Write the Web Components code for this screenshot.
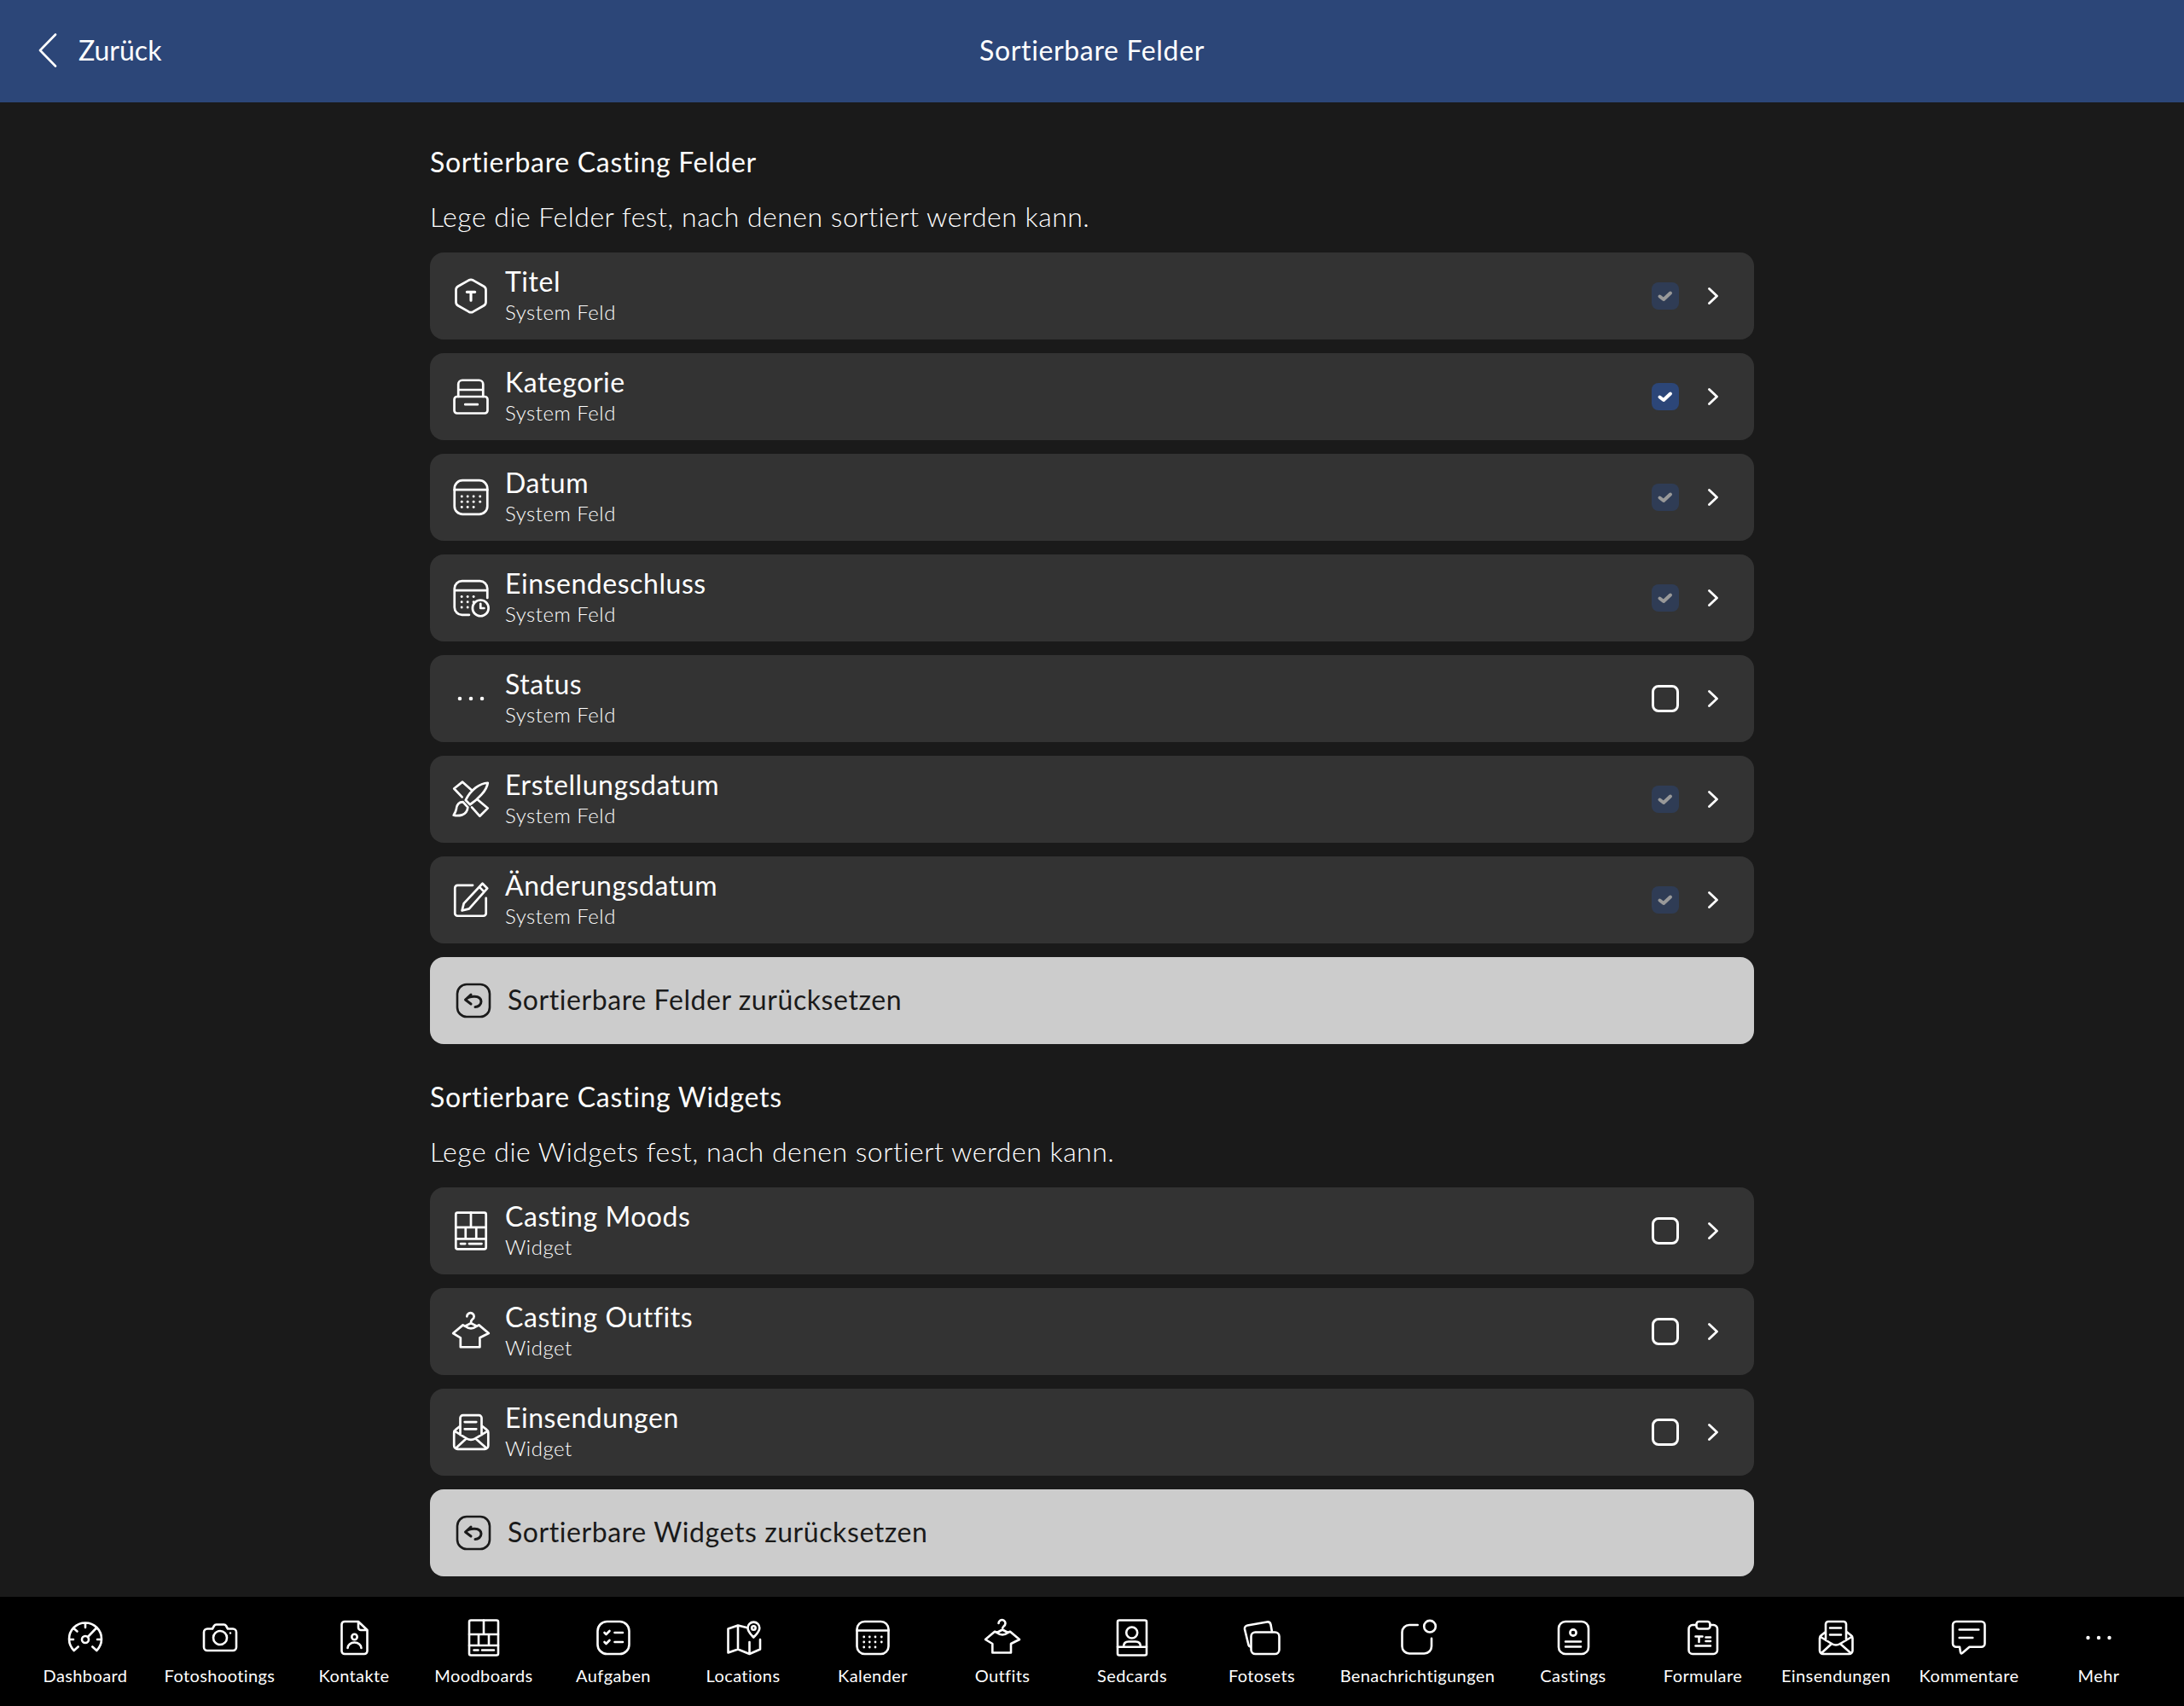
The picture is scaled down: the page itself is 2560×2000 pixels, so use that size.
<!DOCTYPE html>
<html lang="de">
<head>
<meta charset="utf-8">
<title>Sortierbare Felder</title>
<style>
  html, body { margin: 0; height: 100%; }
  body {
    display: flex;
    flex-direction: column;
    height: 2000px;
    background: #1a1a1a;
    color: #fff;
    font-family: "Lato", "Liberation Sans", sans-serif;
  }
  main { flex: 1; display: flex; flex-direction: column; gap: 42px; padding: 50px 504px 0; }
</style>
</head>
<body>
<app-header back="Zurück" title="Sortierbare Felder"></app-header>
<main>
  <field-section heading="Sortierbare Casting Felder" desc="Lege die Felder fest, nach denen sortiert werden kann.">
    <field-row icon="hex" label="Titel" sub="System Feld" state="locked"></field-row>
    <field-row icon="archive" label="Kategorie" sub="System Feld" state="on"></field-row>
    <field-row icon="calendar" label="Datum" sub="System Feld" state="locked"></field-row>
    <field-row icon="calclock" label="Einsendeschluss" sub="System Feld" state="locked"></field-row>
    <field-row icon="more" label="Status" sub="System Feld"></field-row>
    <field-row icon="design" label="Erstellungsdatum" sub="System Feld" state="locked"></field-row>
    <field-row icon="edit" label="Änderungsdatum" sub="System Feld" state="locked"></field-row>
    <reset-button>Sortierbare Felder zurücksetzen</reset-button>
  </field-section>
  <field-section heading="Sortierbare Casting Widgets" desc="Lege die Widgets fest, nach denen sortiert werden kann.">
    <field-row icon="moodboard" label="Casting Moods" sub="Widget"></field-row>
    <field-row icon="outfit" label="Casting Outfits" sub="Widget"></field-row>
    <field-row icon="inbox" label="Einsendungen" sub="Widget"></field-row>
    <reset-button>Sortierbare Widgets zurücksetzen</reset-button>
  </field-section>
</main>
<tab-bar>
  <tab-item icon="gauge" label="Dashboard"></tab-item>
  <tab-item icon="camera" label="Fotoshootings" style="--tab-w: 163px"></tab-item>
  <tab-item icon="contact" label="Kontakte"></tab-item>
  <tab-item icon="moodboard" label="Moodboards"></tab-item>
  <tab-item icon="tasks" label="Aufgaben"></tab-item>
  <tab-item icon="map" label="Locations"></tab-item>
  <tab-item icon="calendar" label="Kalender"></tab-item>
  <tab-item icon="outfit" label="Outfits"></tab-item>
  <tab-item icon="sedcard" label="Sedcards"></tab-item>
  <tab-item icon="photos" label="Fotosets"></tab-item>
  <tab-item icon="notify" label="Benachrichtigungen" style="--tab-w: 213px"></tab-item>
  <tab-item icon="casting" label="Castings"></tab-item>
  <tab-item icon="form" label="Formulare"></tab-item>
  <tab-item icon="inbox" label="Einsendungen" style="--tab-w: 160px"></tab-item>
  <tab-item icon="comment" label="Kommentare"></tab-item>
  <tab-item icon="more" label="Mehr"></tab-item>
</tab-bar>

<script>
const dots = (xs, ys) => ys.map(y => xs.map(x => `<circle class="f" cx="${x}" cy="${y}" r="1.4"/>`).join('')).join('');

// all icons are drawn on a 48 grid
const ICONS = {
  gauge: `<path d="M10.7 41A19 19 0 1 1 37.3 41M24 9v5M11 15.5l3.5 3M5 28h5M38 28h5M10.7 41l5-4.5M37.3 41l-5-4.5M27 25l10-10.5"/><circle cx="24" cy="28" r="4"/>`,
  camera: `<path d="M9 15.5h6l2-3.5a3 3 0 0 1 2.6-1.5h8.8a3 3 0 0 1 2.6 1.5l2 3.5h6a4 4 0 0 1 4 4V37a4 4 0 0 1-4 4H9a4 4 0 0 1-4-4V19.5a4 4 0 0 1 4-4z"/><circle cx="24" cy="26" r="8"/><circle class="f" cx="36" cy="20.5" r="1.2"/>`,
  contact: `<path d="M13 7h16l10.5 10v24.5a3.500 3.500 0 0 1-3.500 3.500H13a3.500 3.500 0 0 1-3.500-3.500v-31A3.500 3.500 0 0 1 13 7zM29 7v7a3 3 0 0 0 3 3h7.500M16.500 38a8 6.500 0 0 1 16 0"/><circle cx="24.5" cy="25" r="3.2"/>`,
  moodboard: `<rect x="7" y="5.5" width="34" height="41" rx="2"/><path d="M7 22h34M24 5.5V22M7 35h34M18 22v13M30 22v13M12.5 40.5h5M22 40.5h14"/>`,
  tasks: `<rect x="5.5" y="7" width="37" height="38" rx="11"/><path d="M13.5 20l2 2 4-4M13.5 31l2 2 4-4M25.5 20H35M25.5 31H35"/>`,
  map: `<path d="M28 14l-10-2.500L6.500 15.500v28l11.500-4 13.500 5.500L44 39.500V28M18 11.500v28M31.500 31v14M36.300 25.500C33 22 29.500 19 29.500 14.500a6.900 6.900 0 0 1 13.800 0C43.300 19 39.600 22 36.300 25.500z"/><circle cx="36.4" cy="14.5" r="2.2"/>`,
  calendar: `<rect x="5.5" y="7" width="37" height="38" rx="9"/><path d="M5.5 17.5h37"/>` + dots([13.7, 20.3, 27, 34.3], [25, 31]) + dots([13.7, 20.3, 27], [37]),
  calclock: `<path d="M22 45h-8a8.500 8.500 0 0 1-8.500-8.500v-21A8.500 8.500 0 0 1 14 7h20a8.500 8.500 0 0 1 8.500 8.500V26M5.500 17.500h37M34.800 32.500v5h4"/><circle cx="34.8" cy="37.4" r="9"/>` + dots([13.6, 20.3, 27], [24.5, 30.5]) + dots([13.6, 20.3], [36.5]),
  outfit: `<path d="M17.500 20L15 18.700 4 28l8.300 5v10.500H34V33l10-5-11-9.300L30.500 20M19.500 9a4 4 0 1 1 6 3.500q-1.500 1-1.500 4M17.500 20l6.500-3.500 6.500 3.500q-6.500 5-13 0z"/>`,
  sedcard: `<rect x="7" y="5.5" width="34" height="41" rx="2"/><circle cx="23.7" cy="20" r="6.5"/><path d="M7 36.700h34M14 36.500q0-6 6-6h8q6 0 6 6"/>`,
  photos: `<rect x="11.5" y="19.5" width="33" height="25.5" rx="5"/><path d="M10.500 36.500a3 3 0 0 1-2-2L4 16a4 4 0 0 1 3.300-4.500L30 7.500a4 4 0 0 1 4.500 3L36 19"/>`,
  notify: `<path d="M23.700 11H14a8.500 8.500 0 0 0-8.500 8.500V36a8.500 8.500 0 0 0 8.500 8.500h17.500A8.500 8.500 0 0 0 40 36v-9.300"/><circle cx="38" cy="12.7" r="6.8"/>`,
  casting: `<rect x="7" y="7" width="35" height="38" rx="8"/><circle cx="24" cy="20" r="3.6"/><path d="M15 30.500h18M15 36.500h18"/>`,
  form: `<path d="M16 11h-4a4.500 4.500 0 0 0-4.500 4.500v25A4.500 4.500 0 0 0 12 45h24.500a4.500 4.500 0 0 0 4.500-4.500v-25a4.500 4.500 0 0 0-4.500-4.500h-4M15.500 24.500h8M19.500 24.500V31M27.500 25.500H33M27.500 30H33M15.500 35.500H33"/><rect x="16.5" y="7" width="16" height="8.5" rx="3"/>`,
  inbox: `<path d="M12 19l-5 4a4 4 0 0 0-2 3.500V41a4 4 0 0 0 4 4h30.500a4 4 0 0 0 4-4V26.500a4 4 0 0 0-2-3.500l-5-4M6 25l13 8q5 3 10 0l13.500-8M7 44l12-11M41.500 44L29 33M12 29V10a3 3 0 0 1 3-3h18a3 3 0 0 1 3 3v19M17 14.500h13M17 22.500h13"/>`,
  comment: `<path d="M9 7h29.500a4 4 0 0 1 4 4v21.700a4 4 0 0 1-4 4H24.500L16 44q-1.500 1-2-1l-1-6.300H9a4 4 0 0 1-4-4V11a4 4 0 0 1 4-4zM12.700 16.500h22.600M12.700 26h15.600"/>`,
  more: `<circle class="f" cx="11.5" cy="26" r="2.2"/><circle class="f" cx="24" cy="26" r="2.2"/><circle class="f" cx="36.5" cy="26" r="2.2"/>`,
  hex: `<path d="M21.500 8.300Q24 7 26.500 8.300l12.100 6.900q2.200 1.300 2.200 3.800v14q0 2.500-2.200 3.800l-12.100 6.900Q24 45 21.500 43.700L9.400 36.800Q7.200 35.500 7.200 33V19q0-2.500 2.200-3.800z"/><path stroke-width="3" d="M19.500 21.500h9M24 21.500V31"/>`,
  archive: `<path d="M9.800 26V12a4.500 4.500 0 0 1 4.500-4.500h18.900a4.500 4.500 0 0 1 4.500 4.500v14M9.800 18.300h27.900M17.500 34.800h14"/><rect x="5.3" y="26" width="37.4" height="18.7" rx="3"/>`,
  design: `<path d="M14 23.500L5 14l9.500-7.500L25 16M31 26l12 10-9 9-9-10M43 7.500C34 8 24 15 18 27l5 5C32 26 42 16 43 7.500zM15 29c-5 0-7 4-7.500 8-.5 3-2 5-3 7 5 1 15 1 16-9z"/>`,
  edit: `<path d="M26 9.500H9a3 3 0 0 0-3 3V41a3 3 0 0 0 3 3h29a3 3 0 0 0 3-3V24M37 7.500l5.500 5.500L22 36l-8 2 2-8zM33.500 11.500l5.500 5.500"/>`,
  undo: `<rect x="5" y="5" width="38" height="38" rx="11"/><path stroke-width="3" d="M21 17l-6.500 6 6.500 5M14.500 23c5-5 18-5.500 18.500 2 0 4-3.500 6.500-7 6.500"/>`
};

class UiIcon extends HTMLElement {
  connectedCallback() {
    const box = this.getAttribute('box') || '0 0 48 48';
    this.attachShadow({mode: 'open'}).innerHTML = `
      <style>
        :host { display: block; flex: none; width: var(--icon-size, 48px); height: var(--icon-size, 48px); }
        svg { display: block; width: 100%; height: 100%; fill: none; stroke: currentColor; stroke-width: 2.6; stroke-linecap: round; stroke-linejoin: round; }
        .f { fill: currentColor; stroke: none; }
      </style>
      <svg viewBox="${box}">${ICONS[this.getAttribute('name')]}</svg>`;
  }
}

class AppHeader extends HTMLElement {
  connectedCallback() {
    this.attachShadow({mode: 'open'}).innerHTML = `
      <style>
        :host { display: grid; grid-template-columns: 1fr auto 1fr; align-items: center; flex: none; box-sizing: border-box; height: 120px; padding-bottom: 3px; background: #2c4678; color: #fff; font-size: 32px; }
        .back { display: flex; align-items: center; gap: 25px; padding-left: 45px; }
        .title { letter-spacing: .65px; }
        svg { display: block; width: 22px; height: 40px; fill: none; stroke: #fff; stroke-width: 2.6; stroke-linecap: round; stroke-linejoin: round; }
      </style>
      <div class="back">
        <svg viewBox="0 0 22 40"><path d="M20 1.500L2 20l18 18.500"/></svg>
        <span>${this.getAttribute('back')}</span>
      </div>
      <div class="title">${this.getAttribute('title')}</div>
      <div></div>`;
  }
}

class FieldSection extends HTMLElement {
  connectedCallback() {
    this.attachShadow({mode: 'open'}).innerHTML = `
      <style>
        :host { display: block; }
        h2 { margin: 0 0 24px; font-size: 32px; line-height: 40px; font-weight: 400; letter-spacing: .68px; }
        p { margin: 0 0 22px; font-size: 32px; line-height: 40px; font-weight: 300; letter-spacing: .49px; }
        .list { display: flex; flex-direction: column; gap: 16px; }
      </style>
      <h2>${this.getAttribute('heading')}</h2>
      <p>${this.getAttribute('desc')}</p>
      <div class="list"><slot></slot></div>`;
  }
}

class FieldRow extends HTMLElement {
  connectedCallback() {
    const state = this.getAttribute('state') || 'off';
    this.attachShadow({mode: 'open'}).innerHTML = `
      <style>
        :host { display: flex; align-items: center; height: 102px; padding: 0 42px 0 23px; background: #333; border-radius: 16px; }
        ui-icon { --icon-size: 50px; margin-right: 15px; }
        .text { flex: 1; display: flex; flex-direction: column; gap: 4px; padding-bottom: 2px; }
        .label { font-size: 32px; line-height: 36px; letter-spacing: .55px; }
        .sub { font-size: 24px; line-height: 28px; font-weight: 300; letter-spacing: .5px; }
        .box { width: 32px; height: 32px; box-sizing: border-box; border-radius: 8px; margin-right: 34px; }
        .box svg { display: none; width: 100%; height: 100%; fill: none; stroke: #fff; stroke-width: 4; stroke-linecap: round; stroke-linejoin: round; }
        .off { border: 3px solid #fff; }
        .on, .locked { background: #2c4678; }
        .on svg, .locked svg { display: block; }
        .locked { opacity: .5; }
        .chev { width: 12px; height: 20px; fill: none; stroke: #fff; stroke-width: 2.8; stroke-linecap: round; stroke-linejoin: round; }
      </style>
      <ui-icon name="${this.getAttribute('icon')}" box="0 2 48 48"></ui-icon>
      <div class="text">
        <div class="label">${this.getAttribute('label')}</div>
        <div class="sub">${this.getAttribute('sub')}</div>
      </div>
      <div class="box ${state}"><svg viewBox="0 0 32 32"><path d="M9.500 16.500l4.500 3.500 8-7.500"/></svg></div>
      <svg class="chev" viewBox="0 0 12 20"><path d="M1.500 1.500L10.500 10l-9 8.500"/></svg>`;
  }
}

class ResetButton extends HTMLElement {
  connectedCallback() {
    this.attachShadow({mode: 'open'}).innerHTML = `
      <style>
        :host { display: flex; align-items: center; gap: 16px; height: 102px; padding-left: 27px; background: #ccc; color: #1a1a1a; border-radius: 16px; font-size: 32px; letter-spacing: .58px; }
        span { padding-bottom: 3px; }
      </style>
      <ui-icon name="undo"></ui-icon>
      <span><slot></slot></span>`;
  }
}

class TabBar extends HTMLElement {
  connectedCallback() {
    this.attachShadow({mode: 'open'}).innerHTML = `
      <style>
        :host { display: flex; flex: none; height: 128px; padding: 0 24px; box-sizing: border-box; background: #000; }
      </style>
      <slot></slot>`;
  }
}

class TabItem extends HTMLElement {
  connectedCallback() {
    this.attachShadow({mode: 'open'}).innerHTML = `
      <style>
        :host { display: flex; flex-direction: column; align-items: center; flex: none; box-sizing: border-box; width: var(--tab-w, 152px); padding-top: 22px; color: #fff; font-size: 20px; line-height: 24px; letter-spacing: .4px; white-space: nowrap; }
        ui-icon { margin-bottom: 10px; }
      </style>
      <ui-icon name="${this.getAttribute('icon')}"></ui-icon>
      <div>${this.getAttribute('label')}</div>`;
  }
}

customElements.define('ui-icon', UiIcon);
customElements.define('app-header', AppHeader);
customElements.define('field-section', FieldSection);
customElements.define('field-row', FieldRow);
customElements.define('reset-button', ResetButton);
customElements.define('tab-bar', TabBar);
customElements.define('tab-item', TabItem);
</script>
</body>
</html>
